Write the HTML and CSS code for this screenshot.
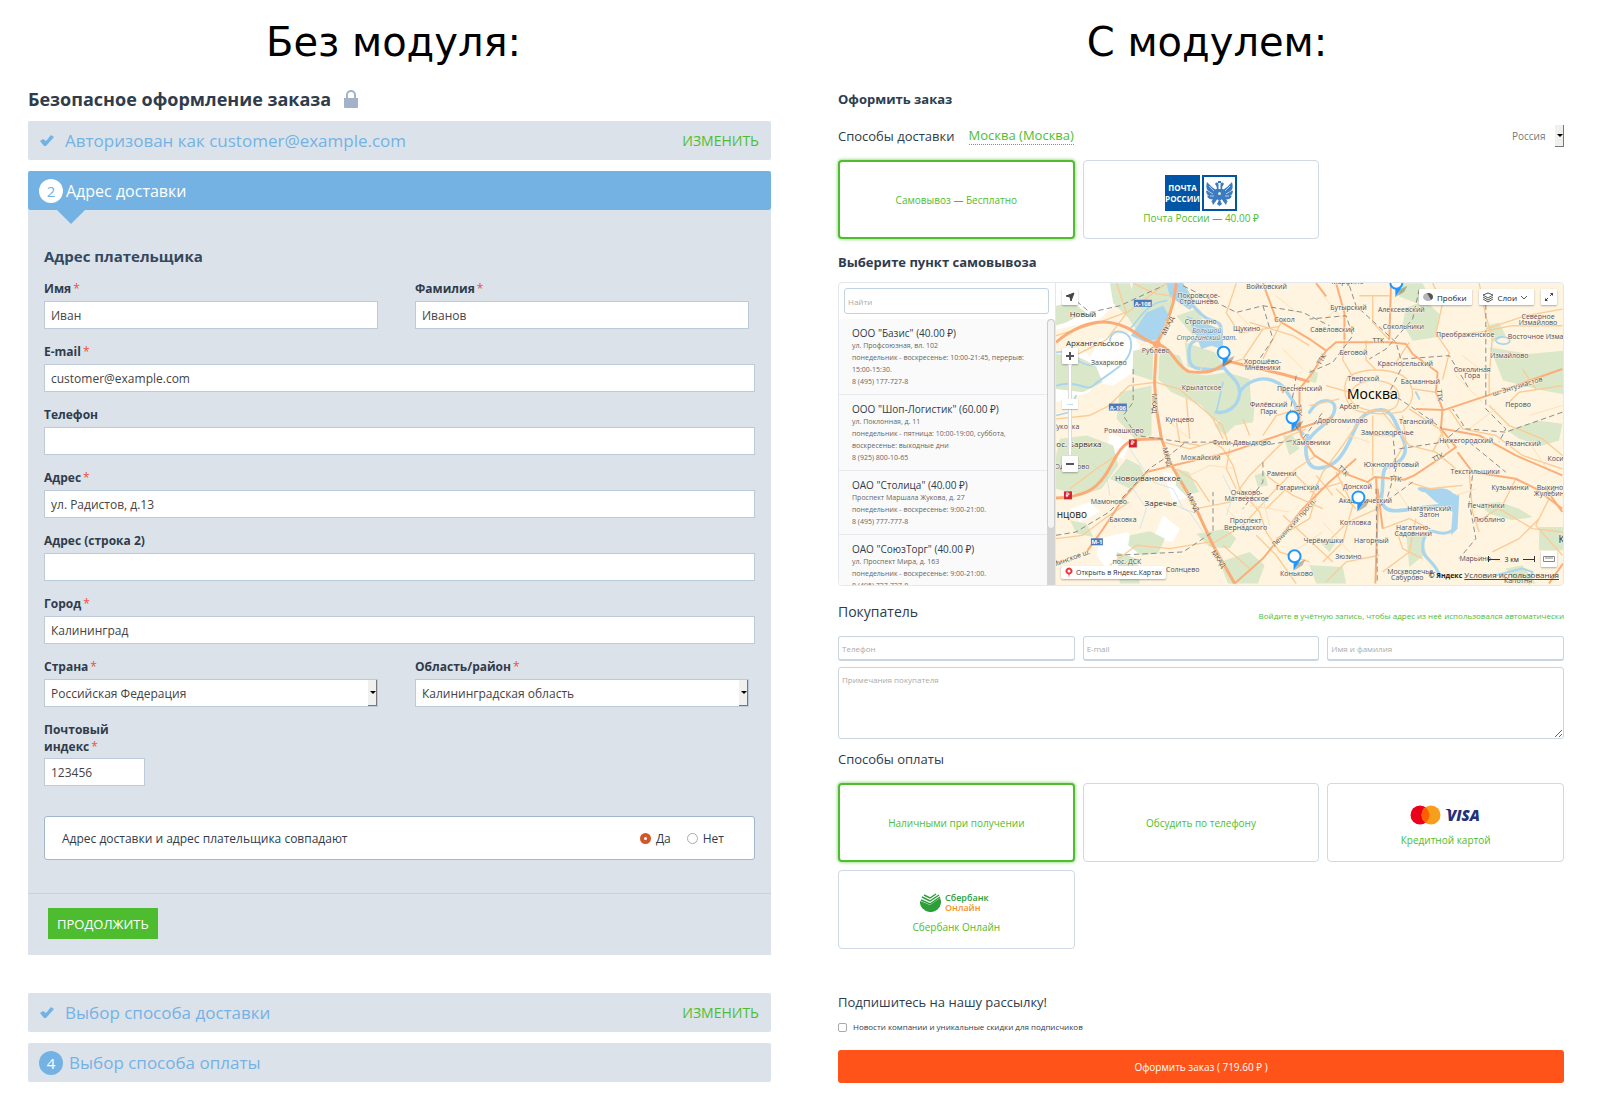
FILE: index.html
```html
<!DOCTYPE html>
<html lang="ru">
<head>
<meta charset="utf-8">
<title>Оформление заказа</title>
<link rel="stylesheet" href="styles.css">
</head>
<body>
<main class="compare">
  <section class="side">
    <h1 class="side-title">Без модуля:</h1>
    <h2 class="page-title">Безопасное оформление заказа
      <svg class="lock" viewBox="0 0 16 18" aria-hidden="true"><path d="M1 8h14v9a1 1 0 0 1-1 1H2a1 1 0 0 1-1-1z" fill="#a1b2c9"/><path d="M4 9V5a4 4 0 0 1 8 0v4" fill="none" stroke="#a1b2c9" stroke-width="2"/></svg>
    </h2>
    <div class="steps">
      <div class="step">
        <svg class="check" viewBox="0 0 14 12" aria-hidden="true"><path d="M0 6l3-2 3 2L11 0l3 2-8 9H4z" fill="#74b2e4"/></svg>
        <span class="step-name">Авторизован как customer@example.com</span>
        <a class="step-edit" href="#">ИЗМЕНИТЬ</a>
      </div>
      <div class="step step-open"><span class="num">2</span><span class="step-name">Адрес доставки</span></div>
    </div>
    <form class="step-body">
      <h3 class="form-title">Адрес плательщика</h3>
      <div class="pair">
        <div class="field"><label for="fn">Имя<i>*</i></label><input id="fn" type="text" value="Иван"></div>
        <div class="field"><label for="ln">Фамилия<i>*</i></label><input id="ln" type="text" value="Иванов"></div>
      </div>
      <div class="field"><label for="em">E-mail<i>*</i></label><input id="em" type="text" value="customer@example.com"></div>
      <div class="field"><label for="ph">Телефон</label><input id="ph" type="text"></div>
      <div class="field"><label for="ad">Адрес<i>*</i></label><input id="ad" type="text" value="ул. Радистов, д.13"></div>
      <div class="field"><label for="ad2">Адрес (строка 2)</label><input id="ad2" type="text"></div>
      <div class="field"><label for="ct">Город<i>*</i></label><input id="ct" type="text" value="Калининград"></div>
      <div class="pair">
        <div class="field"><label for="co">Страна<i>*</i></label><span class="pick"><select id="co"><option>Российская Федерация</option></select></span></div>
        <div class="field"><label for="rg">Область/район<i>*</i></label><span class="pick"><select id="rg"><option>Калининградская область</option></select></span></div>
      </div>
      <div class="field field-zip"><label for="zip">Почтовый индекс<i>*</i></label><input id="zip" type="text" value="123456"></div>
      <div class="same">
        <span class="same-text">Адрес доставки и адрес плательщика совпадают</span>
        <label><input type="radio" name="same" checked>Да</label>
        <label><input type="radio" name="same">Нет</label>
      </div>
      <div class="form-foot"><button class="go" type="button">ПРОДОЛЖИТЬ</button></div>
    </form>
    <div class="steps steps-rest">
      <div class="step">
        <svg class="check" viewBox="0 0 14 12" aria-hidden="true"><path d="M0 6l3-2 3 2L11 0l3 2-8 9H4z" fill="#74b2e4"/></svg>
        <span class="step-name">Выбор способа доставки</span>
        <a class="step-edit" href="#">ИЗМЕНИТЬ</a>
      </div>
      <div class="step step-next"><span class="num">4</span><span class="step-name">Выбор способа оплаты</span></div>
    </div>
  </section>

  <section class="side side-module">
    <h1 class="side-title">С модулем:</h1>
    <h2 class="block-title first">Оформить заказ</h2>
    <div class="delivery">
      <span class="sub">Способы доставки</span>
      <a class="city" href="#">Москва (Москва)</a>
      <span class="pick pick-small"><select aria-label="Страна доставки"><option>Россия</option></select></span>
    </div>
    <div class="cards">
      <button class="card on" type="button">Самовывоз — Бесплатно</button>
      <button class="card post" type="button">
        <svg class="post-logo" viewBox="0 0 72 36" aria-hidden="true">
          <rect width="35" height="36" fill="#0055a6"/>
          <text class="post-word" x="17.500" y="16">ПОЧТА</text><text class="post-word" x="17.500" y="27">РОССИИ</text>
          <rect x="38" y="1" width="33" height="34" fill="#fff" stroke="#0055a6" stroke-width="2"/>
          <g fill="#3c7cbe">
            <path d="M53 15C48 14 46 11 42 7c-1 4-1 7 1 9-1 0-2 0-2-1 0 3 1 5 3 6-1 0-1 0-2-.500 1 3 3 4 6 4l-2 2c3 1 5 0 6-2z"/>
            <path d="M56 15c5-1 7-4 11-8 1 4 1 7-1 9 1 0 2 0 2-1 0 3-1 5-3 6 1 0 1 0 2-.500-1 3-3 4-6 4l2 2c-3 1-5 0-6-2z"/>
            <path d="M51 14h7v7c0 3-2 4-3.500 5C53 25 51 24 51 21zM54 25h1l2 4-2.500 2L52 29z"/>
            <path d="M50 9c1-2 3-2 3.500 0v6h-2c1-2 0-4-1.500-6zM59 9c-1-2-3-2-3.500 0v6h2c-1-2 0-4 1.500-6zM53 6h3v2h-3z"/>
            <path d="M47 27l3-2 1 1-3 4zM62 27l-3-2-1 1 3 4z"/>
          </g>
          <path d="M44 11l5 5M43 16l5 3M45 21l4 0M65 11l-5 5M66 16l-5 3M64 21l-4 0" stroke="#fff" stroke-width=".600" fill="none"/>
          <circle cx="54.500" cy="18.500" r="1.500" fill="#dce8f4"/>
        </svg>
        Почта России — 40.00 ₽
      </button>
    </div>
    <h2 class="block-title">Выберите пункт самовывоза</h2>

    <div class="pickup">
      <div class="points">
        <div class="find"><input type="text" placeholder="Найти" aria-label="Найти"></div>
        <div class="points-scroll">
          <ul class="point-list">
            <li><h4>ООО "Базис" (40.00 ₽)</h4><p>ул. Профсоюзная, вл. 102<br>понедельник - воскресенье: 10:00-21:45, перерыв: 15:00-15:30.<br>8 (495) 177-727-8</p></li>
            <li><h4>ООО "Шоп-Логистик" (60.00 ₽)</h4><p>ул. Поклонная, д. 11<br>понедельник - пятница: 10:00-19:00, суббота, воскресенье: выходные дни<br>8 (925) 800-10-65</p></li>
            <li><h4>ОАО "Столица" (40.00 ₽)</h4><p>Проспект Маршала Жукова, д. 27<br>понедельник - воскресенье: 9:00-21:00.<br>8 (495) 777-777-8</p></li>
            <li><h4>ОАО "СоюзТорг" (40.00 ₽)</h4><p>ул. Проспект Мира, д. 163<br>понедельник - воскресенье: 9:00-21:00.<br>8 (495) 727-727-8</p></li>
          </ul>
          <div class="track"><div class="thumb"></div></div>
        </div>
      </div>
      <div class="map">
        <svg class="map-art" viewBox="0 0 508 303" preserveAspectRatio="xMidYMid slice" role="img" aria-label="Карта Москвы">
          <rect width="508" height="303" fill="#fef4df"/>
          <g transform="translate(-6 -7) scale(.33333)">
            <!-- settlements -->
            <path fill="#fff" d="M18 22h200l-10 50-60 60-130 30zM150 190l90-20 30 40-20 80-60 40-60-10-20-60zM18 260l90-30 50 60-40 60-100 30zM60 520l60 10-10 60-92 30v-60zM180 470l60 30-20 50-50-20zM150 790l80-20 40 30-20 60-80 20-30-40zM340 590l70 10 20 60-60 20zM340 720l50 40-20 40-60-10zM60 700l60-20 30 30-60 30z"/>
            <!-- parks -->
            <g fill="#dae7c8">
              <path d="M250 22h125l-10 90-40 80-60-20-40-60z"/>
              <path d="M180 22h60l20 70-30 30-40-40zM18 90l50-10 40 30-60 30-32 10z"/>
              <path d="M18 235l60 5 60 30 20 50-60 30-80-10z"/>
              <path d="M405 200l90 30 28 40-50 18-60-15z"/>
              <path d="M330 225l60 15 20 50 60 10 60-10 70 20 5 80-60 50-60-10-30-40-90-40-40-40z"/>
              <path d="M250 225l60-10-2 100-60-20zM210 350l95-20v150l-50 10-55-60z"/>
              <path d="M30 490l80-10 80 30 15 60-50 70-60 20-77-20V540z"/>
              <path d="M180 610l50-60 40 20 20 40-50 30zM378 580l40 10 30 60-40 10-30-30z"/>
              <path d="M560 385l55 10-5 45-55 10-30 30-30-30z"/>
              <path d="M240 780l60-12 45 22-20 45-50 5-40-30zM440 775l90-15 30 30-20 30-60-5zM510 860l90-30 45 40-20 55h-90z"/>
              <path d="M60 735l50 10 20 40-50-10zM200 830l60 20 10 75h-60z"/>
              <path d="M380 120l60-20 30 50-40 30zM780 870l100 5 10 50H800z"/>
              <path d="M1070 95l60-20 40 40-10 70-70 10-30-50zM1050 22h70l20 40-40 20-50-20z"/>
              <path d="M1320 215l120 20 102-10v130l-60-10-40-10-80-20-20-50zM1310 150l40-10 20 40-40 20z"/>
              <path d="M1375 465l90-30 75 10-10 50-50 15-70-20zM1470 755h72v70h-72zM1290 685l60-5 60 20 40 25-60 10-70-20z"/>
              <path d="M1070 770l50 5 10 60-50 40zM700 480l30 0 20 40-30 20zM615 600l30-10 10 40-30 5zM800 790l60 10-20 30z"/>
              <path d="M780 280l26 12-6 30-20-4zM1370 880l50-10 40 55h-60z"/>
            </g>
            <!-- water -->
            <g fill="none" stroke="#a9d6ee" stroke-width="10" stroke-linecap="round" stroke-linejoin="round">
              <path d="M395 26c10 40 30 60 60 90s60 10 60 50v60"/>
              <path d="M490 200c-60-20-75 0-72 40 0 40 20 40 70 42l35-5"/>
              <path d="M522 275c20 30 50 40 48 80-5 40-40 60-70 55M570 350c20-30 60-50 100-35s35 30 60 60 0 80 30 100"/>
              <path d="M775 480c-15 60 0 100 35 98 50-5 70-40 90-80s25-90 90-95c40-5 50 45 70 85s0 75-35 80-20 60-28 90c-5 40 20 50 50 48s110-16 150-16" stroke-width="11"/>
              <path d="M780 410c30-50 80-40 76-10-4 40-50 50-76 90"/>
              <path d="M1110 640c30 20 60-10 90 10s20 60 20 90-30 40-60 30-40 20-40 50 40 40 50 80" stroke-width="9"/>
              <path d="M20 330c60-20 90 20 110 0s80-50 100-80 20-70-10-80-40 10-40 30" stroke-width="6"/>
              <path d="M240 160c30-30 50-80 110-85M18 230c50-10 60 40 110 40M18 420l40-10 20-50" stroke-width="5"/>
              <path d="M500 410l20-90M1340 190c20-15 50 0 40 10s-40 5-40-8" stroke-width="5"/>
              <path d="M1340 900l80-20 30 10-10 35M1100 350l10 20" stroke-width="6"/>
            </g>
            <g fill="#a9d6ee">
              <path d="M410 120l50 20 50 20 5 60-30-10-30 10-20-50z"/>
              <path d="M290 110l50-20 18 30-30 70-40 10-45-20z"/>
              <path d="M1110 635l60 5 60 20-5 100-20 20 5-70-50-30zM350 22h50l40 60-20 20-60-40z"/>
            </g>
            <g fill="none" stroke="#bfe0f0" stroke-width="2">
              <path d="M240 520l40 60 30 40 60 20 30 60 60 20M300 700l60-20 60 30 40 60M120 560l50 40 10 60M520 600l30 60-20 60M250 640l40 60-20 60"/>
            </g>
            <!-- streets -->
            <g fill="none" stroke="#fccb95" stroke-width="4" stroke-linejoin="round">
              <path d="M200 22l30 90-60 80-100 50M230 112l80-60 40-30M18 180l130-40 80-30M18 430l100-10 60-30 60-60 80-10 70 20 130 110 20 60"/>
              <path d="M250 22l60 30 60 10M560 22l-30 90 40 60 120-20M640 160l-60 90-60 20M700 130l-60 120M600 140l130 40 50 30"/>
              <path d="M340 500l80 20 70-20 30 20 30 50 20 70 60 70 20 60 40 60 90 30M380 440l10 60 60 10M410 370l10 120M490 430l30 60"/>
              <path d="M440 700l100-20 60-80 120-120 50-20M480 810l100-60 100-110 60-60 60-40M560 640l-30-60 10-60M520 810l80 70M650 700l60-60 80-10"/>
              <path d="M180 870l80-60 100 10 120-20M60 640l80-60 60-40M18 790l80-10 80-60 60-40M380 580l60 40 40 60"/>
              <path d="M640 480l40-60 70-20M600 480l-20-50M650 600l80 60 90 40M740 600l60 60-20 70-100 60M620 780l60 60 60 85M700 720l150 140"/>
              <path d="M900 300c50-25 120-20 160 0 40 30 40 80 0 108-50 10-110 10-150-8-30-30-30-80-10-100z"/>
              <path d="M920 330c30-20 80-20 110 0s20 60 0 70-80 10-110-10-20-40 0-60zM970 60v80l50 53M885 193l-5 60 30 50M930 60h90M950 193v60l30 30M1040 260l40-60M870 370l-90 20M830 330l70 20"/>
              <path d="M940 420l-60 90-60 80-40 90M970 420v180M1000 410l80 100 80 20 60 50M1080 400l90 60 30 60M1060 420l10 80-50 80M1090 340l70 10M960 480h80M780 650l100-30M860 590l50 100-30 110-60 60"/>
              <path d="M1150 22l30 60-20 90 40 60-20 80M1170 180l120-10 100-20 150 0M1290 22l20 100 20 60-10 120 0 60M1310 160l120-40 110-20M1320 390l60 60 100 40 60 50"/>
              <path d="M1200 400l40 60 100 20 80 60 120 40M1180 470l-30 60M1260 590l10 120 20 60M1400 610l-40 80-60 40M1080 620l60 20 100-10M1000 760l80-30 60 30M1100 730l-20 100-80 60M1350 700l100 60 90 10M1330 830l80-40 60-60M1500 670l-40 80 80 90"/>
              <path d="M985 700l-90 40-60 60M990 840l-100 20-60 60M860 640l60 60M800 600l50 60M1040 760l20 60 60 30M1420 280l40 60M1370 390l40-40 130-20"/>
            </g>
            <g fill="none" stroke="#fde0b8" stroke-width="3">
              <path d="M440 300l40-60M360 440l60 50M420 600l60-30 80 10M600 690l120 20M820 740l80 90M900 480l60 20M860 100l-60 60M820 60l60 70M1240 240l80 60M1220 300l80 80M1260 460l80-60M1440 500l60 90M1220 660l60-20M1280 840l80 20M680 60l60 50M560 110l60 60M700 220l60 60M600 640l40 30 20 80M530 700l60 60M730 830l90-60M1040 640l40 60M1440 420l100-30"/>
            </g>
            <!-- main roads -->
            <g fill="none" stroke="#fbae79" stroke-linejoin="round" stroke-width="6">
              <path d="M110 830l50-70 60-90 70-80 80-20 170-40 190-65 120-40"/>
              <path d="M555 925l85-75 120-150 80-80 80-70M640 22l40 108 100 60 50 35M800 22l30 40M860 22l25 90v80M1025 22l-5 170"/>
              <path d="M750 445v-105l40-50 40-65 30-25h160l50 5 20 30 75 55-5 60 20 50-5 60 45 55-35 25-90 60-30 13-90-8-20 15-80-30-80-50-40-60z"/>
              <path d="M1100 400l85 3 145-48 210-75M1180 460l110 20 110 60 140 60M1225 530l45 60 130 20 60 30 80 60"/>
              <path d="M980 605l5 95-7 225M985 640l15 120M1490 640l50 70M1500 925l42-60"/>
            </g>
            <g fill="none" stroke="#fbab76" stroke-linejoin="round" stroke-width="9">
              <path d="M380 22l-10 60-22 70-28 53-6 115 6 80 15 90 30 80 65 110 60 130 65 115"/>
              <path d="M18 200c60-50 110-65 162-60 70 10 100 60 142 65 50 15 50 60 95 83 90 10 90-20 123-30l160 38 80 22"/>
              <path d="M18 668c120-5 140-50 182-128 30-50 50-50 135-50"/>
            </g>
            <circle cx="321" cy="206" r="12" fill="#fbab76"/>
            <!-- railways -->
            <g fill="none" stroke="#8d8d8d" stroke-width="3" stroke-dasharray="16 10">
              <path d="M60 60l60 50 90-20 130-60M250 280v100l-30 40 40 60 140 20h120l120 10 120-20 60-80"/>
              <path d="M18 780l60-10 100-60 120-130 60-40 50-40M200 840l200-10 90-60v-120M640 560v60l-60 80"/>
              <path d="M400 30l120 60 40 20 80-20 120 20 80 40M640 90l30 100-40 60M740 300l-20 120 30 50M780 290l70-30 60-80-20-60-110 10"/>
              <path d="M900 30l20 60 120 110 20 70-40 80 90 60 70 50M1110 40l-20 90-80 90-50 30M1060 250l140-10 60 100M1310 60v340l60 60-20 40M1540 410l-170 60-120-10-40-60"/>
              <path d="M1030 470l10 110-30 100M1050 520l130-20 60-50M1260 500l110 90M1270 600l-10 80 20 110-50 60M980 640l4 285M1090 620l-110 80"/>
            </g>
          </g>
          <g class="lb">
            <text x="292" y="1">Марфино</text><text x="211" y="6">Войковский</text><text x="143" y="15">Покровское-</text><text x="143" y="21">Стрешнево</text>
            <text class="town" x="27" y="34">Новый</text><text x="145" y="41">Строгино</text><text x="191" y="48">Щукино</text><text x="229" y="39">Сокол</text>
            <text class="wt" x="151" y="50">Большой</text><text class="wt" x="151" y="57">Строгинский зат.</text>
            <text class="town" x="39" y="63">Архангельское</text><text x="53" y="82">Захарково</text><text x="100" y="70">Рублёво</text>
            <text x="207" y="81">Хорошёво-</text><text x="207" y="87">Мнёвники</text><text x="146" y="107">Крылатское</text><text x="244" y="108">Пресненский</text>
            <text x="213" y="124">Филёвский</text><text x="213" y="131">Парк</text><text x="124" y="139">Кунцево</text><text x="68" y="150">Ромашково</text><text x="9" y="146">Жуковка</text>
            <text class="town" x="23" y="165">ос. Барвиха</text><text x="186" y="163">Фили-Давыдково</text><text x="256" y="163">Хамовники</text><text x="145" y="178">Можайский</text><text x="16" y="187">Одинцово</text>
            <text class="town" x="92" y="199">Новоивановское</text><text x="226" y="194">Раменки</text><text x="242" y="208">Гагаринский</text><text x="191" y="213">Очаково-</text><text x="191" y="219">Матвеевское</text>
            <text x="53" y="222">Мамоново</text><text class="town" x="105" y="224">Заречье</text><text class="city-lb" x="16" y="236">нцово</text><text x="67" y="240">Баковка</text>
            <text x="190" y="241">Проспект</text><text x="190" y="248">Вернадского</text><text x="71" y="282">пос. ДСК</text><text x="127" y="290">Солнцево</text><text x="241" y="294">Коньково</text>
            <text x="293" y="27">Бутырский</text><text x="346" y="29">Алексеевский</text><text x="277" y="49">Савёловский</text><text x="348" y="46">Сокольники</text><text x="410" y="54">Преображенское</text>
            <text x="483" y="36">Северное</text><text x="483" y="42">Измайлово</text><text x="491" y="56">Восточное Измайлово</text><text x="298" y="72">Беговой</text><text x="454" y="75">Измайлово</text>
            <text x="350" y="83">Красносельский</text><text x="417" y="89">Соколиная</text><text x="417" y="95">Гора</text><text x="308" y="98">Тверской</text><text x="365" y="101">Басманный</text>
            <text x="294" y="126">Арбат</text><text x="463" y="124">Перово</text><text x="287" y="140">Дорогомилово</text><text x="361" y="141">Таганский</text><text x="332" y="153">Замоскворечье</text>
            <text x="411" y="161">Нижегородский</text><text x="468" y="164">Рязанский</text><text x="336" y="185">Южнопортовый</text><text x="420" y="192">Текстильщики</text><text x="505" y="179">Косино</text>
            <text x="455" y="208">Кузьминки</text><text x="496" y="208">Выхино-</text><text x="496" y="214">Жулебино</text><text x="302" y="207">Донской</text><text x="310" y="221">Академический</text>
            <text x="374" y="229">Нагатинский</text><text x="374" y="235">Затон</text><text x="431" y="226">Печатники</text><text x="434" y="240">Люблино</text><text x="300" y="243">Котловка</text>
            <text x="358" y="248">Нагатино-</text><text x="358" y="254">Садовники</text><text x="268" y="261">Черёмушки</text><text x="316" y="261">Нагорный</text><text x="293" y="277">Зюзино</text><text x="420" y="279">Марьино</text>
            <text x="356" y="292">Москворечье-</text><text x="352" y="298">Сабурово</text><text x="463" y="301">Капотня</text><text class="city-lb" x="512" y="261">Кот</text>
            <text class="capital" x="317" y="116">Москва</text>
            <text class="rd" transform="translate(114 44) rotate(-65)">МКАД</text><text class="rd" transform="translate(96 121) rotate(90)">МКАД</text><text class="rd" transform="translate(109 175) rotate(75)">МКАД</text><text class="rd" transform="translate(135 221) rotate(63)">МКАД</text><text class="rd" transform="translate(161 278) rotate(55)">МКАД</text>
            <text class="rd" transform="translate(323 60)">ТТК</text><text class="rd" transform="translate(268 78) rotate(-60)">ТТК</text><text class="rd" transform="translate(382 113) rotate(85)">ТТК</text><text class="rd" transform="translate(384 177) rotate(-28)">ТТК</text><text class="rd" transform="translate(340 199) rotate(5)">ТТК</text><text class="rd" transform="translate(286 190) rotate(45)">ТТК</text><text class="rd" transform="translate(241 128) rotate(85)">ТТК</text>
            <text class="rd" transform="translate(463 106) rotate(-17)">ш. Энтузиастов</text><text class="rd" transform="translate(240 242) rotate(-48)">Ленинский просп.</text><text class="rd" transform="translate(16 278) rotate(-20)">Минское ш.</text>
          </g>
          <g fill="#4d79bc"><rect x="78" y="17" width="18" height="7"/><rect x="53" y="121" width="18" height="7"/><rect x="35" y="256" width="12" height="7"/></g>
          <g class="shield"><text x="87" y="23">А-108</text><text x="62" y="127">А-106</text><text x="41" y="262">М-1</text></g>
          <g><rect x="73" y="157" width="8" height="8" fill="#d3222f"/><rect x="8" y="209" width="8" height="8" fill="#d3222f"/></g>
          <g class="shield"><text x="77" y="163">₽</text><text x="12" y="215">₽</text></g>
          <defs>
            <g id="pin">
              <path d="M0 14l8-5 3-6-8 4z" fill="#000" opacity=".25"/>
              <path d="M-1 5h6l-6 9.500z" fill="#1e98ff"/>
              <circle r="6" fill="#fff" stroke="#1e98ff" stroke-width="2"/>
            </g>
          </defs>
          <use href="#pin" x="168" y="70"/><use href="#pin" x="237" y="135"/><use href="#pin" x="303" y="215"/><use href="#pin" x="239" y="274"/><use href="#pin" x="341" y="0"/>
        </svg>
        <button class="mbtn m-loc" type="button" aria-label="Моё местоположение"><svg viewBox="0 0 16 16"><path d="M12 4L9 12 8 8 4 7z" fill="#444" stroke="#444"/></svg></button>
        <div class="m-zoom">
          <button class="mbtn" type="button" aria-label="Приблизить"><svg viewBox="0 0 16 16"><path d="M4 8h8M8 4v8" stroke="#555" stroke-width="2"/></svg></button>
          <div class="m-rail"><span class="m-knob">···</span></div>
          <button class="mbtn" type="button" aria-label="Отдалить"><svg viewBox="0 0 16 16"><path d="M4 8h8" stroke="#555" stroke-width="2"/></svg></button>
        </div>
        <div class="m-top">
          <button class="mbtn wide" type="button"><svg viewBox="0 0 12 12"><ellipse cx="6" cy="6" rx="5" ry="4" fill="#b5b5b5"/><path d="M5 2a5 4 0 0 1 6 4 5 4 0 0 1-2 3z" fill="#555"/></svg>Пробки</button>
          <button class="mbtn wide" type="button"><svg viewBox="0 0 12 12"><path d="M1 4l5-2 5 2-5 3zM1 6l5 3 5-3M1 8l5 3 5-3" fill="none" stroke="#555"/></svg>Слои<svg class="chev" viewBox="0 0 8 8"><path d="M1 3l3 3 3-3" fill="none" stroke="#555"/></svg></button>
          <button class="mbtn" type="button" aria-label="На весь экран"><svg viewBox="0 0 16 16"><path d="M9 7l3-3M7 9l-3 3" stroke="#444"/><path d="M9 4h3v3zM4 9v3h3z" fill="#444"/></svg></button>
        </div>
        <a class="m-open" href="#"><svg viewBox="0 0 8 12"><path d="M4 11L3.500 7.500A3.500 3.500 0 1 1 4.500 7.500z" fill="#f03535"/><circle cx="4" cy="4" r="1.500" fill="#fff"/></svg>Открыть в Яндекс.Картах</a>
        <div class="m-scale"><span class="bar"></span>3 км<span class="bar end"></span><button class="mbtn" type="button" aria-label="Линейка"><svg viewBox="0 0 16 16"><path d="M2.500 5.500h11v5h-11zM5 6v2M7 6v2M9 6v2M11 6v2" fill="none" stroke="#888"/></svg></button></div>
        <div class="m-copy"><b>© Яндекс</b> <a href="#">Условия использования</a></div>
      </div>
    </div>

    <div class="buyer-head"><h2>Покупатель</h2><a class="login" href="#">Войдите в учётную запись, чтобы адрес из неё использовался автоматически</a></div>
    <div class="buyer">
      <input type="text" placeholder="Телефон" aria-label="Телефон">
      <input type="text" placeholder="E-mail" aria-label="E-mail">
      <input type="text" placeholder="Имя и фамилия" aria-label="Имя и фамилия">
      <textarea placeholder="Примечания покупателя" aria-label="Примечания покупателя"></textarea>
    </div>
    <h2 class="sub pay-title">Способы оплаты</h2>
    <div class="cards">
      <button class="card on" type="button">Наличными при получении</button>
      <button class="card" type="button">Обсудить по телефону</button>
      <button class="card logo-card" type="button">
        <svg class="logo" viewBox="0 0 72 20" aria-hidden="true"><circle cx="10" cy="10" r="9.500" fill="#eb001b"/><circle cx="21" cy="10" r="9.500" fill="#f79e1b"/><path d="M15.500 2.300a9.500 9.500 0 0 1 0 15.400 9.500 9.500 0 0 1 0-15.400z" fill="#ff5f00"/><text class="visa" x="37" y="16">VISA</text><path d="M35 4h5l1 3z" fill="#26307a"/></svg>
        Кредитной картой
      </button>
      <button class="card logo-card" type="button">
        <svg class="logo" viewBox="0 0 72 20" aria-hidden="true"><path d="M0 9a10.500 10 0 0 0 21 2c0-2 0-3-1-5L10 13z" fill="#2c9f38"/><path d="M1 8l9 4 10-7M2 5l8 4 9-6M4 3l6 3 6-4" fill="none" stroke="#2c9f38" stroke-width="1.500"/><text class="sb" x="25" y="9" fill="#2c9f38">Сбербанк</text><text class="sb" x="25" y="19" fill="#f7941d">Онлайн</text></svg>
        Сбербанк Онлайн
      </button>
    </div>
    <h2 class="sub news-title">Подпишитесь на нашу рассылку!</h2>
    <label class="news"><input type="checkbox">Новости компании и уникальные скидки для подписчиков</label>
    <button class="order" type="button">Оформить заказ ( 719.60 ₽ )</button>
  </section>
</main>
</body>
</html>
```
FILE: styles.css
```css
* { box-sizing: border-box; }
body { margin: 0; background: #fff; color: #333; font-family: "Open Sans", "Noto Sans", sans-serif; font-size: 12px; }
h1, h2, h3, h4, p, ul { margin: 0; padding: 0; }
button, input, select, textarea { font: inherit; margin: 0; }
a { color: #4ebd2f; text-decoration: none; }

.compare { display: grid; grid-template-columns: 743fr 726fr; column-gap: 67px; padding: 0 36px 16px 28px; }
.side { min-width: 0; }
.side-title { padding-right: 12px; font: 400 40px/84px "DejaVu Sans", sans-serif; color: #000; text-align: center; }
.side-module .side-title { padding: 0 0 0 12px; }

/* step-by-step checkout */
.page-title { display: flex; align-items: center; gap: 12px; font-size: 18px; line-height: 30px; font-weight: 700; color: #2f3c4c; }
.lock { width: 16px; height: 18px; }
.steps { display: grid; gap: 11px; margin-top: 7px; }
.steps-rest { margin-top: 38px; }
.step { display: flex; align-items: center; height: 39px; padding: 0 12px 0 11px; background: #dce2ea; border-radius: 2px; color: #74b2e4; font-size: 17px; }
.check { width: 14px; height: 12px; margin: 0 11px 0 1px; }
.step-edit { margin-left: auto; font-size: 14px; }
.num { width: 24px; height: 24px; border-radius: 50%; background: #74b2e4; color: #fff; font-size: 15px; line-height: 24px; text-align: center; margin-right: 6px; }
.step-open { position: relative; background: #74b2e4; color: #fff; }
.step-open .step-name { font-size: 16px; }
.step-open .num { background: #fff; color: #74b2e4; margin-right: 3px; }
.step-open::after { content: ""; position: absolute; left: 29px; top: 100%; border: 14px solid transparent; border-top-color: #74b2e4; border-bottom: 0; }
.step-body { background: #dce2ea; padding: 34px 16px 0; }
.form-title { font-size: 15px; line-height: 24px; font-weight: 700; color: #34495e; margin-bottom: 12px; }
.pair { display: grid; grid-template-columns: 1fr 1fr; gap: 37px; padding-right: 6px; }
.field { display: grid; gap: 3px; margin-bottom: 14px; }
.field label { font-size: 12px; line-height: 18px; font-weight: 700; color: #2f3c4c; }
.field i { margin-left: 2px; color: #f0503c; font-style: normal; font-weight: 400; }
.field input, .field select { display: block; width: 100%; height: 28px; padding: 0 6px; border: 1px solid #bccad9; border-radius: 0; background: #fff; color: #444; font-size: 12px; }
.field-zip { width: 101px; margin-bottom: 30px; }
.field-zip label { line-height: 17px; }
.pick { position: relative; display: block; }
.pick select { appearance: none; }
.pick::before { content: ""; position: absolute; right: 1px; top: 1px; bottom: 1px; width: 8px; background: #f0f0ee; border-right: 1px solid #777; border-bottom: 1px solid #777; }
.pick::after { content: ""; position: absolute; right: 2px; top: 50%; margin-top: -2px; border: 3px solid transparent; border-top-color: #000; border-bottom: 0; }
.same { display: flex; align-items: center; gap: 16px; height: 44px; padding: 0 30px 0 17px; background: #fff; border: 1px solid #a1b5cc; border-radius: 3px; color: #2f3c4c; }
.same-text { margin-right: auto; }
.same label { display: flex; align-items: center; gap: 5px; }
.same input { appearance: none; width: 11px; height: 11px; border: 1px solid #aaa; border-radius: 50%; background: #fff; }
.same input:checked { border: 4px solid #d0562c; }
.form-foot { margin: 33px -16px 0; padding: 14px 20px 16px; border-top: 1px solid #c8d2de; }
.go { display: block; height: 31px; padding: 0 9px; border: 0; background: #4dbd2f; color: #fff; font-size: 13px; }

/* one-page checkout */
.block-title { font-size: 13px; line-height: 20px; font-weight: 700; color: #2f3c4c; margin: 13px 0 10px; }
.block-title.first { line-height: 30px; margin: 0 0 10px; }
.sub { font-size: 13px; line-height: 20px; font-weight: 400; color: #2f3c4c; }
.delivery { display: flex; align-items: center; gap: 14px; height: 24px; margin-bottom: 12px; }
.city { font-size: 13px; line-height: 17px; border-bottom: 1px dotted #4ebd2f; }
.pick-small { margin-left: auto; }
.pick-small select { height: 24px; padding: 0 18px 0 0; border: 0; background: #fff; color: #777; font-size: 10px; }
.pick-small::before { right: 0; }
.pick-small::after { right: 1px; }
.cards { display: grid; grid-template-columns: repeat(3, 1fr); gap: 8px; }
.card { height: 79px; padding: 0; border: 1px solid #ced9e4; border-radius: 4px; background: #fff; color: #4ebd2f; font-size: 10px; line-height: 14px; display: flex; flex-direction: column; align-items: center; justify-content: center; }
.card.on { border: 2px solid #4ebd2f; box-shadow: 0 0 3px 1px #a9e09a; }
.post-logo { width: 72px; height: 36px; }
.post-word { font: 700 8px "Open Sans", sans-serif; fill: #fff; text-anchor: middle; }
.logo-card { gap: 8px; padding-top: 7px; }
.logo { width: 72px; height: 20px; }
.visa { font: italic 800 15px "Open Sans", sans-serif; fill: #26307a; }
.sb { font: 600 9px "Open Sans", sans-serif; }

.pickup { display: grid; grid-template-columns: 216px 1fr; height: 304px; border: 1px solid #e2e8ee; border-radius: 4px; overflow: hidden; }
.points { display: flex; flex-direction: column; min-height: 0; }
.find { padding: 5px 6px 5px 5px; }
.find input { display: block; width: 100%; height: 26px; padding: 0 3px; border: 1px solid #c3d2e0; border-radius: 3px; font-size: 8px; }
::placeholder { color: #aaa; opacity: 1; }
.points-scroll { display: grid; grid-template-columns: 1fr 8px; flex: 1; min-height: 0; overflow: hidden; }
.point-list { list-style: none; background: #fafafa; min-width: 0; }
.point-list li { padding: 7px 12px 6px 13px; border-bottom: 1px solid #e6e9ed; }
.point-list h4 { font-size: 10px; line-height: 14px; font-weight: 400; color: #2f3c4c; }
.point-list p { font-size: 7px; line-height: 12px; color: #666; }
.track { background: #d4d4d4; border-radius: 4px; }
.thumb { height: 75%; background: #f3f3f3; border: 1px solid #ccc; border-radius: 4px; }

.map { position: relative; overflow: hidden; border-left: 1px solid #e2e8ee; font-size: 8px; color: #222; }
.map-art { display: block; width: 100%; height: 100%; }
.lb { font: 7px "Open Sans", sans-serif; fill: #4b4f68; text-anchor: middle; stroke: #fef4df; stroke-width: 1px; paint-order: stroke; }
.lb .town { font-size: 8px; fill: #333; }
.lb .city-lb { font-size: 10px; fill: #222; }
.lb .capital { font-size: 14px; fill: #000; }
.lb .wt { font-style: italic; fill: #3d74ac; }
.lb .rd { fill: #5d4c3c; }
.shield { font: 700 6px "Open Sans", sans-serif; fill: #fff; text-anchor: middle; }
.mbtn { display: flex; align-items: center; justify-content: center; width: 16px; height: 16px; padding: 0; border: 0; border-radius: 1px; background: #fff; box-shadow: 0 1px 2px rgba(0,0,0,.3); color: #222; font-size: 8px; }
.mbtn svg { width: 16px; height: 16px; }
.mbtn.wide { width: auto; padding: 0 6px 0 3px; gap: 3px; }
.mbtn.wide svg { width: 12px; height: 12px; }
.mbtn.wide .chev { width: 8px; height: 8px; }
.m-loc { position: absolute; left: 6px; top: 6px; }
.m-zoom { position: absolute; left: 6px; top: 65px; }
.m-rail { position: relative; width: 4px; height: 92px; margin: 0 auto; background: #fff; border: 1px solid #ddd; }
.m-knob { position: absolute; left: -7px; top: 34px; width: 16px; height: 10px; background: #fff; box-shadow: 0 1px 1px rgba(0,0,0,.2); color: #888; line-height: 10px; text-align: center; }
.m-top { position: absolute; right: 6px; top: 6px; display: flex; gap: 7px; }
.m-open { position: absolute; left: 5px; bottom: 6px; display: flex; align-items: center; gap: 3px; height: 13px; padding: 0 4px; background: #fff; border-radius: 2px; box-shadow: 0 1px 2px rgba(0,0,0,.3); color: #333; font-size: 7px; }
.m-open svg { width: 8px; height: 12px; }
.m-scale { position: absolute; right: 6px; bottom: 18px; display: flex; align-items: center; gap: 4px; font-size: 7px; }
.m-scale .mbtn { margin-left: 2px; }
.bar { width: 12px; height: 6px; border-left: 1px solid #333; background: linear-gradient(#333, #333) center / 100% 1px no-repeat; }
.bar.end { border-left: 0; border-right: 1px solid #333; }
.m-copy { position: absolute; right: 4px; bottom: 3px; line-height: 12px; }
.m-copy a { color: #444; text-decoration: underline; }
.m-copy b { font-size: 7px; }

.buyer-head { display: flex; justify-content: space-between; align-items: flex-end; margin: 16px 0 14px; color: #2f3c4c; }
.buyer-head h2 { font-size: 14px; line-height: 20px; font-weight: 400; }
.login { font-size: 8px; line-height: 12px; }
.buyer { display: grid; grid-template-columns: repeat(3, 1fr); gap: 6px 8px; font-size: 8px; }
.buyer input, .buyer textarea { width: 100%; height: 25px; padding: 0 3px; border: 1px solid #c9d5e1; border-radius: 3px; background: #fff; }
.buyer input { border-bottom-width: 2px; }
.buyer textarea { display: block; grid-column: 1 / -1; height: 72px; padding-top: 6px; }
.pay-title { margin: 10px 0 14px; }
.news-title { margin-top: 43px; }
.news { display: flex; align-items: center; gap: 6px; margin: 7px 0 15px; font-size: 8px; line-height: 16px; color: #2f3c4c; }
.news input { appearance: none; width: 9px; height: 9px; border: 1px solid #aaa; border-radius: 2px; background: #fff; }
.order { display: block; width: 100%; height: 33px; border: 0; border-radius: 3px; background: #ff531a; color: #fff; font-size: 10px; }
```
